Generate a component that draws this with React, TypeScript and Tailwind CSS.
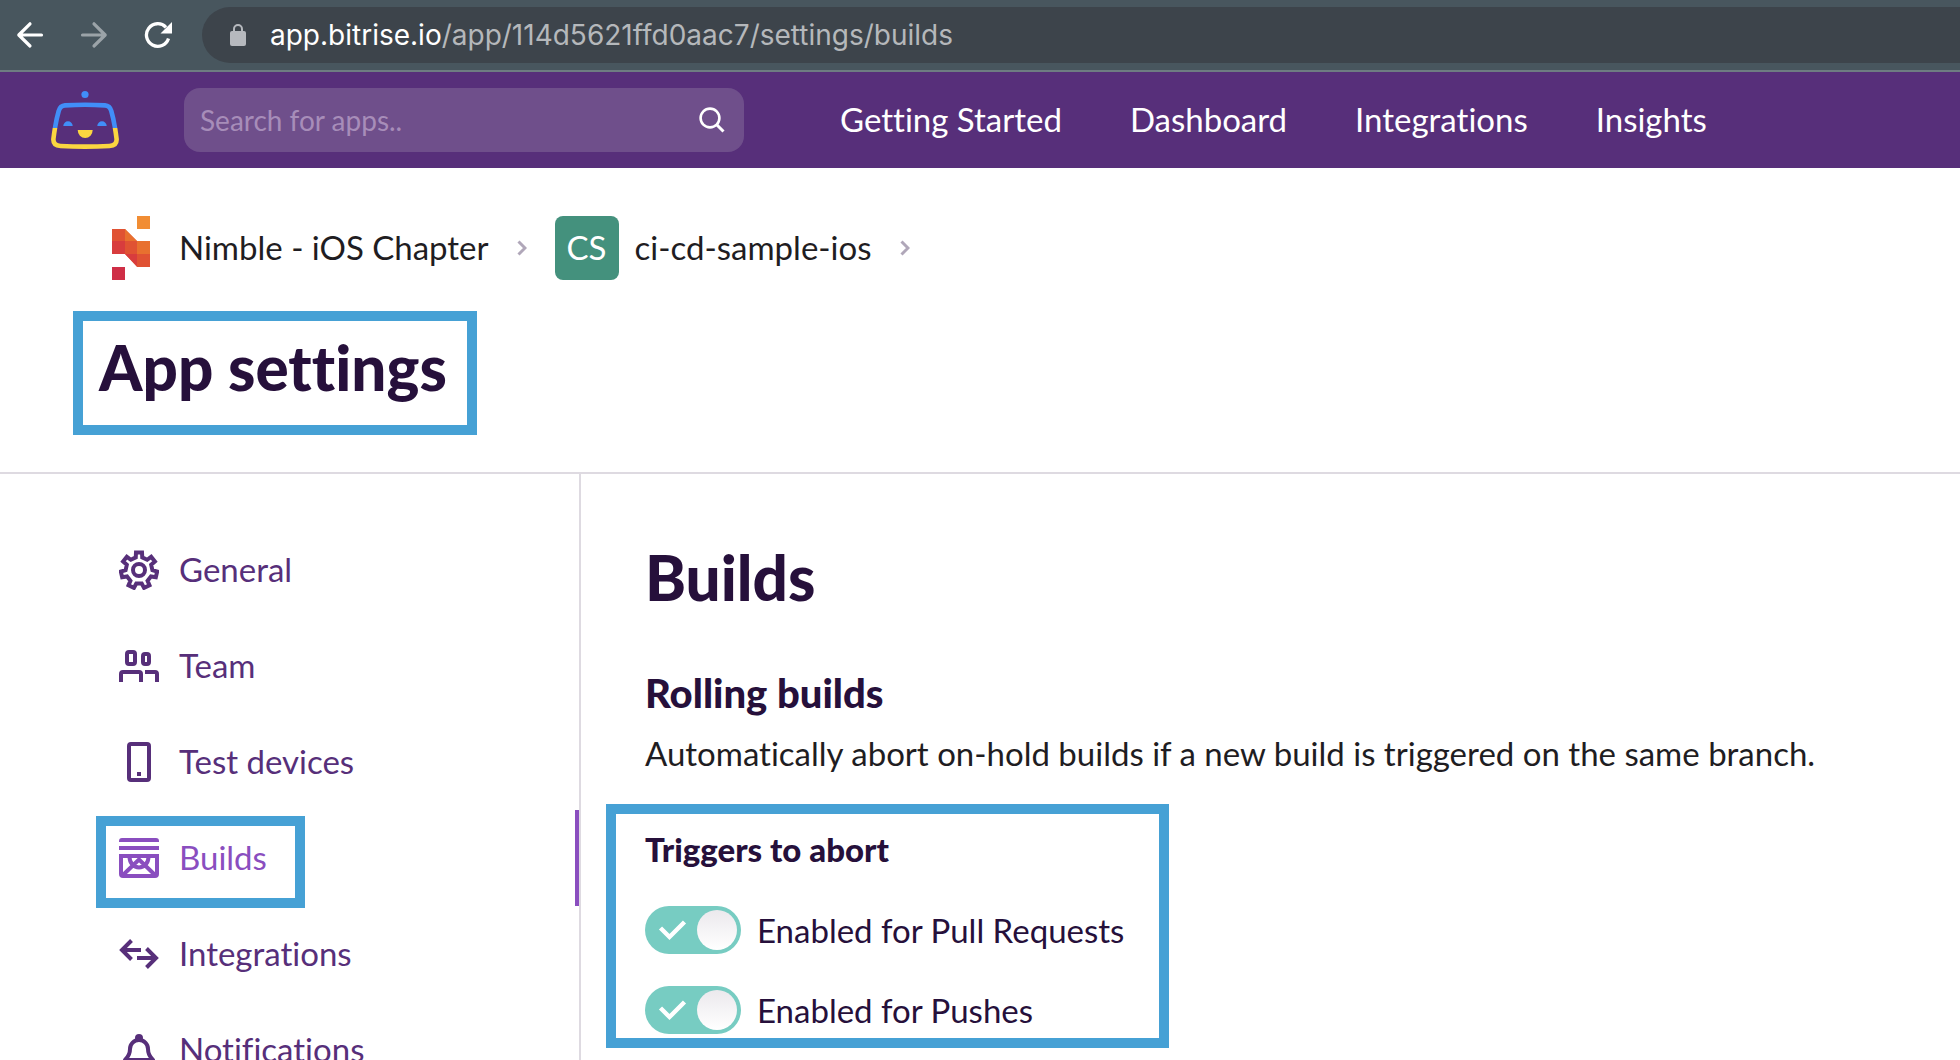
import type { ReactNode } from "react";

const gearPath = (() => {
  const teeth = 7;
  const points: string[] = [];
  const at = (radius: number, degrees: number) => {
    const a = ((degrees - 90) * Math.PI) / 180;
    points.push(`${(20 + radius * Math.cos(a)).toFixed(2)} ${(20.4 + radius * Math.sin(a)).toFixed(2)}`);
  };
  for (let i = 0; i < teeth; i++) {
    const c = (360 / teeth) * i;
    at(13.4, c - 14);
    at(18.2, c - 9.5);
    at(18.2, c + 9.5);
    at(13.4, c + 14);
  }
  return `M${points.join("L")}Z`;
})();

function NavIcon({ children }: { children: ReactNode }) {
  return (
    <svg className="size-10 shrink-0" viewBox="0 0 40 40" fill="none" stroke="currentColor" strokeWidth="4" aria-hidden="true">
      {children}
    </svg>
  );
}

const navItems: { label: string; active?: boolean; icon: ReactNode }[] = [
  {
    label: "General",
    icon: (
      <>
        <path d={gearPath} />
        <circle cx="20" cy="20" r="6" />
      </>
    ),
  },
  {
    label: "Team",
    icon: (
      <>
        <rect x="8" y="6" width="8" height="12" rx="2" />
        <rect x="24" y="8" width="6" height="10" rx="2" />
        <path d="M2 36V28a2 2 0 0 1 2-2h16a2 2 0 0 1 2 2v8M26 26h10a2 2 0 0 1 2 2v8" />
      </>
    ),
  },
  {
    label: "Test devices",
    icon: (
      <>
        <rect x="10" y="2" width="20" height="36" rx="2" />
        <path d="M18 32h4" />
      </>
    ),
  },
  {
    label: "Builds",
    active: true,
    icon: (
      <>
        <path d="M0 4V3a3 3 0 0 1 3-3h34a3 3 0 0 1 3 3v1zM0 8h40v4H0z" fill="currentColor" stroke="none" />
        <path d="M2 18h36v18a2 2 0 0 1-2 2H4a2 2 0 0 1-2-2z" />
        <path d="M10.500 19a9.500 10.500 0 0 0 19 0M4.500 36.500L20 21.500l15.500 15" />
      </>
    ),
  },
  {
    label: "Integrations",
    icon: (
      <>
        <path d="M22 16H4M12.500 6.500L3 16l9.500 9.500" />
        <path d="M18 24h18M27.500 14.500L37 24l-9.500 9.500" />
      </>
    ),
  },
  {
    label: "Notifications",
    icon: (
      <>
        <circle cx="20" cy="8" r="4" fill="currentColor" stroke="none" />
        <path d="M6 30c3-3 5-6 5-11a9 9 0 0 1 18 0c0 5 2 8 5 11z" strokeLinejoin="round" />
        <path d="M16 36h8" />
      </>
    ),
  },
];

function BrowserBar() {
  return (
    <div className="flex h-18 shrink-0 items-center border-b-2 border-[#6e7c82] bg-[#48565e] pl-3">
      <button type="button" aria-label="Back" className="flex size-9 items-center justify-center text-white">
        <svg className="size-7" viewBox="0 0 28 28" fill="none" stroke="currentColor" strokeWidth="3.2" strokeLinecap="round" strokeLinejoin="round">
          <path d="M25.500 14H3M14 2.800L2.800 14 14 25" />
        </svg>
      </button>
      <button type="button" aria-label="Forward" className="ml-7 flex size-9 items-center justify-center text-[#9ba3a8]">
        <svg className="size-7" viewBox="0 0 28 28" fill="none" stroke="currentColor" strokeWidth="3.200" strokeLinecap="round" strokeLinejoin="round">
          <path d="M2.500 14H25M14 2.800L25.200 14 14 25" />
        </svg>
      </button>
      <button type="button" aria-label="Reload" className="ml-7 flex size-9 items-center justify-center text-white">
        <svg className="size-7" viewBox="0 0 28 28" fill="none">
          <path d="M24.500 17.500A11.300 11.300 0 1 1 22 6.300" stroke="currentColor" strokeWidth="3.300" />
          <path d="M28 1v11.500H16.500z" fill="currentColor" />
        </svg>
      </button>
      <div className="ml-[26px] flex h-14 flex-1 items-center rounded-l-full bg-[#3d444b] pl-7">
        <svg className="h-[22px] w-4 shrink-0" viewBox="0 0 16 22" aria-hidden="true">
          <path d="M4 9V5a4 4 0 0 1 8 0v4" fill="none" stroke="#b6b9be" strokeWidth="2" />
          <rect y="7" width="16" height="15" rx="2" fill="#b6b9be" />
        </svg>
        <div className="ml-6 text-[28px] font-[Inter,sans-serif] text-[#b5b8bb]">
          <span className="text-white">app.bitrise.io</span>/app/114d5621ffd0aac7/settings/builds
        </div>
      </div>
    </div>
  );
}

const robotBody =
  "M17 17.400Q37 16 57 17.400Q61.800 17.800 63.300 23Q66.500 34 68.600 51Q69 57.500 61.500 58Q37 59.300 12.500 58Q5 57.500 5.400 51Q7.500 34 10.700 23Q12.200 17.800 17 17.400Z";

function TopNav() {
  return (
    <header className="flex h-24 shrink-0 items-center bg-[#572f7a] pl-12">
      <a href="#home" aria-label="Bitrise home">
        <svg className="h-16 w-[74px]" viewBox="0 0 74 64" fill="none">
          <clipPath id="robot-upper">
            <rect width="74" height="40" />
          </clipPath>
          <clipPath id="robot-lower">
            <rect y="40" width="74" height="24" />
          </clipPath>
          <circle cx="37" cy="6.500" r="3.600" fill="#418ef8" />
          <path d={robotBody} stroke="#418ef8" strokeWidth="4.600" clipPath="url(#robot-upper)" />
          <path d={robotBody} stroke="#fbd640" strokeWidth="4.600" clipPath="url(#robot-lower)" />
          <path d="M15.300 38a4.700 4.700 0 0 1 9.400 0zM49.300 38a4.700 4.700 0 0 1 9.400 0z" fill="#418ef8" />
          <path d="M29.700 42h15a7.500 8 0 0 1-15 0z" fill="#fbd640" />
        </svg>
      </a>
      <form role="search" className="ml-[62px] flex h-16 w-[560px] items-center rounded-2xl bg-[#6f4f8b] pr-4 pl-4">
        <input
          type="text"
          aria-label="Search for apps"
          placeholder="Search for apps.."
          className="min-w-0 flex-1 bg-transparent text-[28px] text-white outline-none placeholder:text-[#a78db9]"
        />
        <button type="button" aria-label="Search" className="flex size-8 items-center justify-center text-white">
          <svg className="size-7" viewBox="0 0 28 28" fill="none" stroke="currentColor" strokeWidth="2.600">
            <circle cx="12" cy="12" r="9.400" />
            <path d="M18.500 18.500l7 7" strokeWidth="3" />
          </svg>
        </button>
      </form>
      <nav aria-label="Main" className="ml-24 flex gap-[68px] text-[33px] text-white">
        <a href="#getting-started">Getting Started</a>
        <a href="#dashboard">Dashboard</a>
        <a href="#integrations">Integrations</a>
        <a href="#insights">Insights</a>
      </nav>
    </header>
  );
}

function Crumb() {
  return (
    <svg className="mx-7 h-4 w-2.5" viewBox="0 0 10 16" fill="none" stroke="#b0a7b9" strokeWidth="3" aria-hidden="true">
      <path d="M1.500 1.500L8 8l-6.500 6.500" />
    </svg>
  );
}

function NimbleLogo() {
  return (
    <svg className="h-16 w-[38px]" viewBox="0 0 38 64" aria-hidden="true">
      <path d="M25 0h13v13H25z" fill="#f18d34" />
      <path d="M0 13h13l12 12h13v26H25L13 38H0z" fill="#e05233" />
      <path d="M0 25h13v13H0zM13 38h12v12z" fill="#d83c3d" />
      <path d="M13 13l12 12H13zM25 25h13v13H25z" fill="#e8702f" />
      <path d="M0 51h13v13H0z" fill="#cf2e46" />
    </svg>
  );
}

function Toggle({ id, label }: { id: string; label: string }) {
  return (
    <div className="flex items-center">
      <span className="relative h-12 w-24">
        <input
          id={id}
          type="checkbox"
          defaultChecked
          className="peer block h-12 w-24 appearance-none rounded-full bg-gray-300 checked:bg-[#77ccc2]"
        />
        <svg className="pointer-events-none absolute inset-0 hidden h-12 w-24 peer-checked:block" viewBox="0 0 96 48" fill="none" aria-hidden="true">
          <path d="M15.500 22l9 9 15-15" stroke="#fff" strokeWidth="4.400" />
        </svg>
        <span className="pointer-events-none absolute top-1 left-1 size-10 rounded-full bg-linear-to-b from-[#ebe9ed] to-white peer-checked:left-13" />
      </span>
      <label htmlFor={id} className="ml-4 text-[33px] leading-10 text-[#26103b]">
        {label}
      </label>
    </div>
  );
}

export default function App() {
  return (
    <div className="flex h-screen flex-col overflow-hidden bg-white font-[Lato,sans-serif] [font-variant-ligatures:none]">
      <BrowserBar />
      <TopNav />
      <div className="shrink-0 border-b-2 border-[#dedae1] pt-12 pb-[69px] pl-[99px]">
        <nav aria-label="Breadcrumb" className="flex items-center text-[33px] text-[#1f1d22]">
          <a href="#nimble" className="flex items-center">
            <span className="flex w-16 justify-center">
              <NimbleLogo />
            </span>
            <span className="ml-4">Nimble - iOS Chapter</span>
          </a>
          <Crumb />
          <a href="#ci-cd-sample-ios" className="flex items-center">
            <span className="flex size-16 items-center justify-center rounded-lg bg-[#44917d] text-[33px] text-white">CS</span>
            <span className="ml-4">ci-cd-sample-ios</span>
          </a>
          <Crumb />
        </nav>
        <h1 className="relative mt-[51px] text-[62px] leading-18 font-black text-[#26103b]">
          App settings
          <span className="pointer-events-none absolute -top-5 -bottom-8 -left-[26px] w-[404px] border-10 border-[#46a1d5]" />
        </h1>
      </div>
      <div className="flex min-h-0 flex-1">
        <nav aria-label="App settings" className="w-[581px] shrink-0 border-r-2 border-[#dedae1] pt-12">
          <ul>
            {navItems.map((item) => (
              <li key={item.label} className="relative">
                <a
                  href="#settings"
                  aria-current={item.active ? "page" : undefined}
                  className={
                    item.active
                      ? "flex h-24 items-center gap-5 border-r-4 border-[#8a4ebf] pl-[119px] text-[33px] text-[#8a4ebf]"
                      : "flex h-24 items-center gap-5 pl-[119px] text-[33px] text-[#572f7a]"
                  }
                >
                  <NavIcon>{item.icon}</NavIcon>
                  {item.label}
                </a>
                {item.active && (
                  <span className="pointer-events-none absolute top-1.5 left-24 h-[92px] w-[209px] border-10 border-[#46a1d5]" />
                )}
              </li>
            ))}
          </ul>
        </nav>
        <main className="flex-1 pt-[67px] pl-16 text-[#26103b]">
          <h2 className="text-[62px] leading-18 font-black">Builds</h2>
          <h3 className="mt-14 text-[40px] leading-12 font-black">Rolling builds</h3>
          <p className="mt-4 text-[33px] leading-10 text-[#1f1d22]">
            Automatically abort on-hold builds if a new build is triggered on the same branch.
          </p>
          <section className="relative mt-14">
            <h4 className="text-[33px] leading-10 font-black">Triggers to abort</h4>
            <div className="mt-[37px] flex flex-col gap-8">
              <Toggle id="pull-requests" label="Enabled for Pull Requests" />
              <Toggle id="pushes" label="Enabled for Pushes" />
            </div>
            <span className="pointer-events-none absolute -top-[25px] -bottom-[14px] -left-[39px] w-[563px] border-10 border-[#46a1d5]" />
          </section>
        </main>
      </div>
    </div>
  );
}
